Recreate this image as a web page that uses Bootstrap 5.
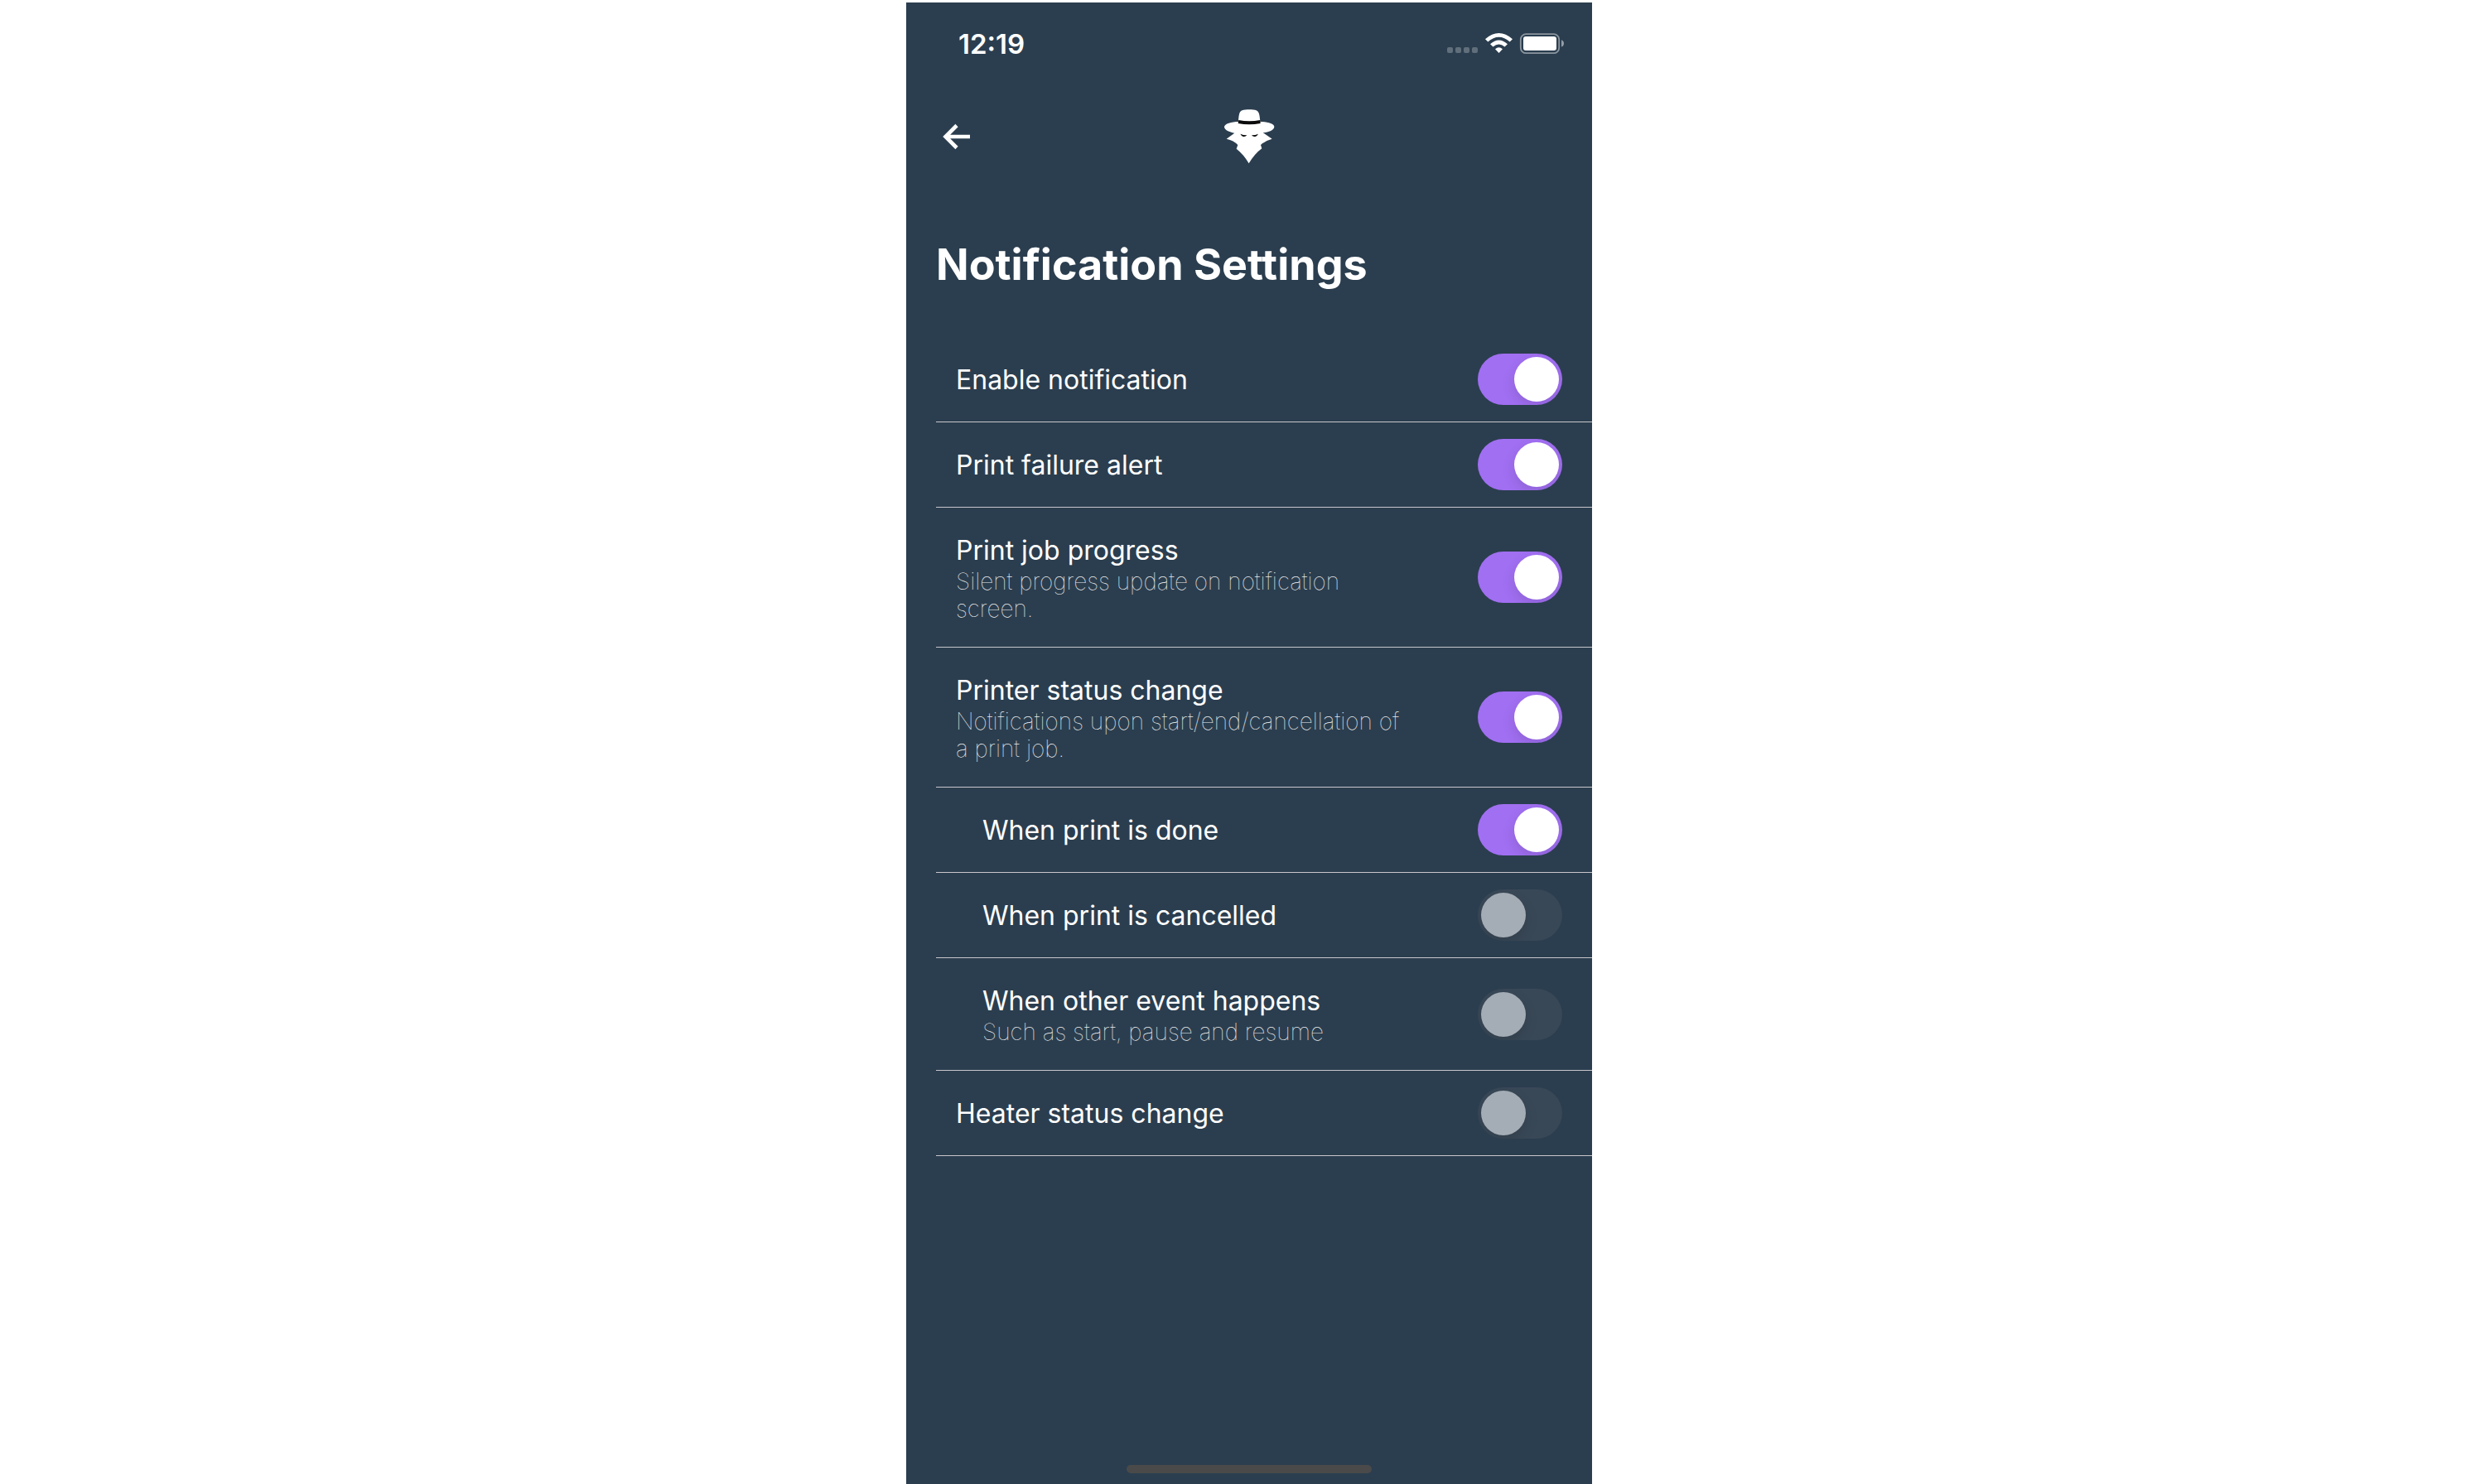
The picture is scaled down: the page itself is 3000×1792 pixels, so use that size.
<!DOCTYPE html>
<html lang="en">
<head>
<meta charset="utf-8">
<meta name="viewport" content="width=device-width, initial-scale=1">
<title>Notification Settings</title>
<link href="https://cdn.jsdelivr.net/npm/bootstrap@5.3.0/dist/css/bootstrap.min.css" rel="stylesheet">
<style>
  body { background: #fff; padding: 3px 0 0 16px; font-family: Inter, "Liberation Sans", sans-serif; }
  .phone { width: 100%; max-width: 828px; min-height: calc(100vh - 3px); background: #2b3e4f; color: #fff; }
  .status-bar { padding: 30px 33px 18px 63px; font-size: 33px; line-height: 40px; font-weight: 600; }
  .app-bar { height: 148px; padding: 0 36px; }
  .app-bar > * { flex: 1 1 0; }
  .back-link { line-height: 0; padding-left: 8px; }
  .page-title { margin: 48px 36px 54px; font-size: 52px; line-height: 66px; font-weight: 700; }
  .settings { margin-left: 36px; }
  .setting { padding: 20px 36px 20px 24px; border-bottom: 1px solid #c8c7cc; }
  .setting-detailed { padding-top: 29px; padding-bottom: 29px; }
  .setting-nested { padding-left: 56px; }
  .setting-label { flex: 1; margin-right: 80px; padding-top: 2px; font-size: 32px; line-height: 42px; font-weight: 400; }
  .setting-hint { display: block; font-size: 28px; line-height: 33px; font-weight: 100; color: #ececec; }
  .toggle.form-check-input { flex: none; width: 102px; height: 62px; margin: 0; border: 0; border-radius: 31px; overflow: hidden; background: #394857; cursor: pointer; }
  .toggle.form-check-input::before { content: ""; display: block; width: 54px; height: 54px; margin: 4px; border-radius: 50%; background: #a4acb5; box-shadow: 0 6px 16px rgba(0, 0, 0, .12); }
  .toggle.form-check-input:checked { background: #a16ff2; }
  .toggle.form-check-input:checked::before { margin-left: 44px; background: #fff; }
  .home-bar { width: 296px; height: 10px; margin-bottom: 13px; border-radius: 5px; background: #4a4a4a; }
</style>
</head>
<body>
<main class="phone d-flex flex-column mx-auto">
  <div class="status-bar d-flex justify-content-between align-items-center">
    <span>12:19</span>
    <svg width="142" height="26" viewBox="0 0 142 26" fill="#fff" aria-hidden="true">
      <g opacity=".25"><rect y="17" width="7" height="7" rx="2"/><rect x="10" y="17" width="7" height="7" rx="2"/><rect x="20" y="17" width="7" height="7" rx="2"/><rect x="30" y="17" width="7" height="7" rx="2"/></g>
      <path d="M46 7.200Q62.500-7.200 79 7.200L75.700 10.500Q62.500-1.200 49.300 10.500ZM52 13.200Q62.500 3.800 73 13.200L69.500 16.600Q62.500 10.400 55.500 16.600ZM58 19.200Q62.500 15.400 67 19.200L62.500 24Z"/>
      <rect x="88.800" y="1.200" width="46.400" height="23" rx="6.500" fill="none" stroke="#fff" stroke-opacity=".45" stroke-width="1.800"/>
      <rect x="92" y="4" width="40" height="17" rx="3"/>
      <path d="M138 8.200Q141 9.500 141 12.400Q141 15.300 138 16.500Z" opacity=".5"/>
    </svg>
  </div>
  <header class="app-bar d-flex align-items-center">
    <div><a class="back-link d-inline-block" href="#" aria-label="Back"><svg width="34" height="32" viewBox="0 0 34 32" fill="none" stroke="#fff" stroke-width="4.600"><path d="M17 2.500L3.500 16L17 29.500M3.500 16H33"/></svg></a></div>
    <div class="text-center lh-1">
      <svg width="62" height="68" viewBox="50 33 186 204" fill="#fff" role="img" aria-label="Detective">
        <path d="M104 78C106 55 107 44 118 40C129 36 158 36 169 40C180 44 181 60 183 78L183 81C210 81 234 88 234 99C234 111 214 119 193 121L198 124L226 143Q200 150 185 165L189 178Q163 197 142 232Q124 200 97 179L102 165Q88 149 61 143L90 122C72 119 53 111 53 100C53 88 80 81 104 81Z"/>
        <path d="M105 75Q143 83 183 75L184 87Q143 95 103 87ZM111 125Q121 130 135 130Q130 136 122 135Q115 133 111 125ZM176 125Q167 130 152 130Q157 136 165 135Q172 133 176 125Z" fill="#0b0b0b"/>
      </svg>
    </div>
    <div></div>
  </header>
  <h1 class="page-title">Notification Settings</h1>
  <form class="settings">
    <div class="setting d-flex align-items-center">
      <label class="setting-label" for="enable">Enable notification</label>
      <input class="toggle form-check-input" type="checkbox" role="switch" id="enable" checked>
    </div>
    <div class="setting d-flex align-items-center">
      <label class="setting-label" for="failure">Print failure alert</label>
      <input class="toggle form-check-input" type="checkbox" role="switch" id="failure" checked>
    </div>
    <div class="setting setting-detailed d-flex align-items-center">
      <label class="setting-label" for="progress">Print job progress<span class="setting-hint">Silent progress update on notification screen.</span></label>
      <input class="toggle form-check-input" type="checkbox" role="switch" id="progress" checked>
    </div>
    <div class="setting setting-detailed d-flex align-items-center">
      <label class="setting-label" for="status">Printer status change<span class="setting-hint">Notifications upon start/end/cancellation of a print job.</span></label>
      <input class="toggle form-check-input" type="checkbox" role="switch" id="status" checked>
    </div>
    <div class="setting setting-nested d-flex align-items-center">
      <label class="setting-label" for="done">When print is done</label>
      <input class="toggle form-check-input" type="checkbox" role="switch" id="done" checked>
    </div>
    <div class="setting setting-nested d-flex align-items-center">
      <label class="setting-label" for="cancelled">When print is cancelled</label>
      <input class="toggle form-check-input" type="checkbox" role="switch" id="cancelled">
    </div>
    <div class="setting setting-detailed setting-nested d-flex align-items-center">
      <label class="setting-label" for="other">When other event happens<span class="setting-hint">Such as start, pause and resume</span></label>
      <input class="toggle form-check-input" type="checkbox" role="switch" id="other">
    </div>
    <div class="setting d-flex align-items-center">
      <label class="setting-label" for="heater">Heater status change</label>
      <input class="toggle form-check-input" type="checkbox" role="switch" id="heater">
    </div>
  </form>
  <div class="home-bar mt-auto mx-auto"></div>
</main>
<script src="https://cdn.jsdelivr.net/npm/bootstrap@5.3.0/dist/js/bootstrap.bundle.min.js"></script>
</body>
</html>
